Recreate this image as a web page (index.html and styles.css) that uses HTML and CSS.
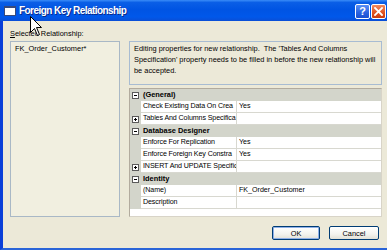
FILE: index.html
```html
<!DOCTYPE html>
<html>
<head>
<meta charset="utf-8">
<link rel="stylesheet" href="styles.css">
</head>
<body>
<div class="window">
  <div class="titlebar">
    <span class="ticon"></span>
    <span class="title">Foreign Key Relationship</span>
    <span class="tbtns">
      <span class="tbtn help">?</span>
      <span class="tbtn close"><svg width="9" height="9" viewBox="0 0 9 9"><path d="M1 1 L8 8 M8 1 L1 8" stroke="#fff" stroke-width="1.8" stroke-linecap="square"/></svg></span>
    </span>
  </div>
  <div class="body">
    <div class="label"><u>S</u>elected Relationship:</div>
    <div class="panes">
      <div class="list"><div class="item">FK_Order_Customer*</div></div>
      <div class="right">
        <div class="desc">Editing properties for new relationship.&nbsp; The 'Tables And Columns Specification' property needs to be filled in before the new relationship will be accepted.</div>
        <div class="grid">
          <div class="gut"><span class="exp minus"></span></div><div class="cat">(General)</div>
          <div class="gut"></div><div class="nm">Check Existing Data On Crea</div><div class="val">Yes</div>
          <div class="gut"><span class="exp plus"></span></div><div class="nm">Tables And Columns Specifica</div><div class="val"></div>
          <div class="gut"><span class="exp minus"></span></div><div class="cat">Database Designer</div>
          <div class="gut"></div><div class="nm">Enforce For Replication</div><div class="val">Yes</div>
          <div class="gut"></div><div class="nm">Enforce Foreign Key Constra</div><div class="val">Yes</div>
          <div class="gut"><span class="exp plus"></span></div><div class="nm">INSERT And UPDATE Specific</div><div class="val"></div>
          <div class="gut"><span class="exp minus"></span></div><div class="cat">Identity</div>
          <div class="gut"></div><div class="nm">(Name)</div><div class="val">FK_Order_Customer</div>
          <div class="gut"></div><div class="nm">Description</div><div class="val"></div>
        </div>
      </div>
    </div>
    <div class="buttons">
      <button class="btn ok">OK</button>
      <button class="btn cancel">Cancel</button>
    </div>
  </div>
  <svg class="cursor" width="13" height="21" viewBox="0 0 13 21"><path d="M0.5 0.5 L0.5 16.5 L4.5 12.5 L7.5 19.5 L9.5 18.5 L6.5 11.5 L11.5 11.5 Z" fill="#fff" stroke="#000" stroke-width="1"/></svg>
</div>
</body>
</html>
```
FILE: styles.css
```css
* { box-sizing: border-box; }
html, body { margin: 0; padding: 0; }
body { width: 387px; height: 250px; overflow: hidden; font-family: "Liberation Sans", Arial, sans-serif; font-size: 7.4px; color: #000; }
.window { position: relative; width: 387px; height: 250px; background: #ece9d8; display: flex; flex-direction: column; }
.titlebar { height: 21px; flex: none; display: flex; align-items: center; background: linear-gradient(to bottom, #3a8cf8 0%, #0a5ee6 12%, #0054e3 45%, #0058ea 80%, #0a4ed6 100%); color: #fff; }
.ticon { flex: none; width: 12px; height: 10px; margin: 1px 3px 0 4px; background: #fff; border: 1px solid #394a7a; border-top-width: 2px; }
.title { font-family: "Liberation Sans", sans-serif; font-weight: bold; font-size: 10px; letter-spacing: -0.55px; flex: 1; text-shadow: 1px 1px 0 #0a2a8a; }
.tbtns { display: flex; gap: 1px; margin-right: 1px; margin-top: 1px; }
.tbtn { width: 15px; height: 15px; border: 1px solid #fff; border-radius: 2px; display: flex; align-items: center; justify-content: center; color: #fff; font-weight: bold; font-size: 11px; font-family: "Liberation Sans", sans-serif; }
.help { background: linear-gradient(to bottom, #5b8ff5, #2a63e0 60%, #1b50d0); }
.close { background: linear-gradient(to bottom, #f08a60, #e0521f 60%, #c83c10); }
.body { flex: 1; display: flex; flex-direction: column; border-left: 3px solid #0a3fd8; border-bottom: 2px solid #2a64d8; padding: 7px 6px 0 7px; }
.label { height: 11px; line-height: 11px; margin-bottom: 2px; }
.panes { height: 176px; display: grid; grid-template-columns: 110px 253px; gap: 9px; }
.list { border: 1px solid #a9b8c6; background: #f1efe0; padding: 2px 4px; }
.item { line-height: 10px; }
.right { display: flex; flex-direction: column; gap: 3px; }
.desc { height: 44px; border: 1px solid #a8bcd2; padding: 1px 4px; line-height: 11px; }
.grid { flex: 1; border: 1px solid #b2ab9e; border-right-color: #d8d4c8; border-bottom-color: #d8d4c8; background: #fff; display: grid; grid-template-columns: 11px 96px 1fr; grid-auto-rows: 12px; align-content: start; }
.gut { background: #d3d5cb; display: flex; align-items: center; justify-content: center; }
.cat { grid-column: span 2; background: #d3d5cb; font-weight: bold; line-height: 12px; padding-left: 2px; border-bottom: 1px solid #d3d5cb; }
.nm { line-height: 11px; padding-left: 2px; border-bottom: 1px solid #d8d8d0; border-right: 1px solid #d8d8d0; white-space: nowrap; overflow: hidden; font-size: 7.1px; letter-spacing: -0.1px; }
.val { line-height: 11px; padding-left: 2px; border-bottom: 1px solid #d8d8d0; white-space: nowrap; overflow: hidden; font-size: 7.1px; }
.exp { position: relative; width: 7px; height: 7px; border: 1px solid #5a5a5a; background: #fff; }
.exp::before { content: ""; position: absolute; left: 1px; top: 2px; width: 3px; height: 1px; background: #000; }
.plus::after { content: ""; position: absolute; left: 2px; top: 1px; width: 1px; height: 3px; background: #000; }
.buttons { display: flex; justify-content: flex-end; gap: 9px; margin-top: 9px; padding-right: 2px; }
.btn { height: 14px; padding: 0; font-family: "Liberation Sans", sans-serif; font-size: 7.4px; color: #000; border: 1px solid #003c74; border-radius: 2px; background: linear-gradient(to bottom, #ffffff, #f3f3ee 60%, #e2e0d6); }
.ok { width: 48px; box-shadow: inset 0 0 0 1px #8fb0e8; }
.cancel { width: 50px; }
.cursor { position: absolute; left: 30px; top: 16px; }
```
